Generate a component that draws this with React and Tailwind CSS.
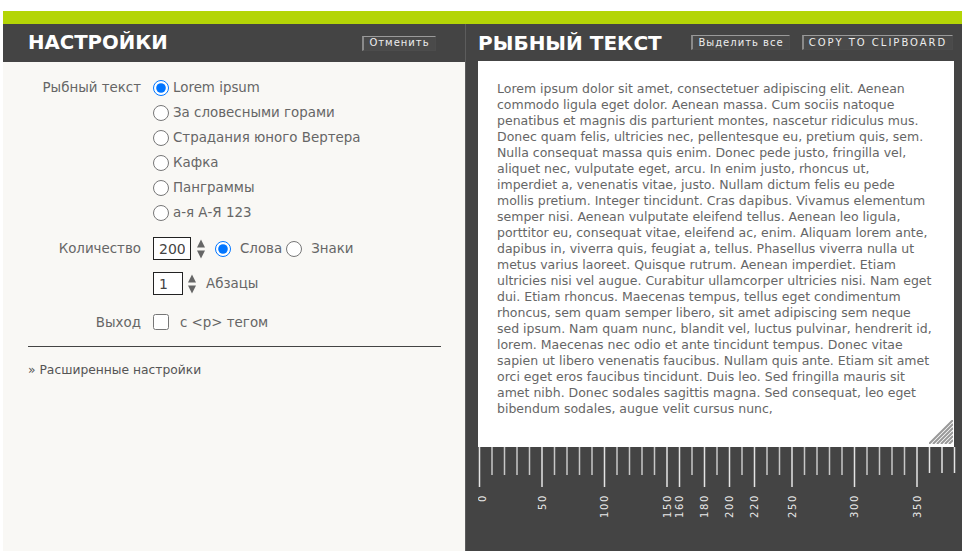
const sources = ["Lorem ipsum", "За словесными горами", "Страдания юного Вертера", "Кафка", "Панграммы", "а-я А-Я 123"];

const lines = [
  "Lorem ipsum dolor sit amet, consectetuer adipiscing elit. Aenean",
  "commodo ligula eget dolor. Aenean massa. Cum sociis natoque",
  "penatibus et magnis dis parturient montes, nascetur ridiculus mus.",
  "Donec quam felis, ultricies nec, pellentesque eu, pretium quis, sem.",
  "Nulla consequat massa quis enim. Donec pede justo, fringilla vel,",
  "aliquet nec, vulputate eget, arcu. In enim justo, rhoncus ut,",
  "imperdiet a, venenatis vitae, justo. Nullam dictum felis eu pede",
  "mollis pretium. Integer tincidunt. Cras dapibus. Vivamus elementum",
  "semper nisi. Aenean vulputate eleifend tellus. Aenean leo ligula,",
  "porttitor eu, consequat vitae, eleifend ac, enim. Aliquam lorem ante,",
  "dapibus in, viverra quis, feugiat a, tellus. Phasellus viverra nulla ut",
  "metus varius laoreet. Quisque rutrum. Aenean imperdiet. Etiam",
  "ultricies nisi vel augue. Curabitur ullamcorper ultricies nisi. Nam eget",
  "dui. Etiam rhoncus. Maecenas tempus, tellus eget condimentum",
  "rhoncus, sem quam semper libero, sit amet adipiscing sem neque",
  "sed ipsum. Nam quam nunc, blandit vel, luctus pulvinar, hendrerit id,",
  "lorem. Maecenas nec odio et ante tincidunt tempus. Donec vitae",
  "sapien ut libero venenatis faucibus. Nullam quis ante. Etiam sit amet",
  "orci eget eros faucibus tincidunt. Duis leo. Sed fringilla mauris sit",
  "amet nibh. Donec sodales sagittis magna. Sed consequat, leo eget",
  "bibendum sodales, augue velit cursus nunc,",
];

const labels = { 0: "0", 5: "50", 10: "100", 15: "150", 16: "160", 18: "180", 20: "200", 22: "220", 25: "250", 30: "300", 35: "350" };

function PixelButton({ children, className }) {
  return (
    <button className={"flex h-[15px] items-center justify-center border border-[#4c4c4c] border-l-2 border-l-[#8a8a8a] border-t-[#9a9a9a] bg-[#4a4a4a] font-['DejaVu_Sans',sans-serif] text-[10px] leading-none text-[#eeeeee] " + className}>
      {children}
    </button>
  );
}

function Spinner() {
  return (
    <svg width="10" height="22" viewBox="0 0 10 22" className="shrink-0">
      <path d="M5 1.5 L9 9.5 H1 Z" fill="#666" />
      <path d="M5 20.5 L9 12.5 H1 Z" fill="#666" />
    </svg>
  );
}

function Ruler() {
  const ticks = Array.from({ length: 39 }, (_, i) => i);
  return (
    <svg width="484" height="104" className="block">
      {ticks.map((i) => {
        const x = 1.5 + i * 12.5;
        const major = labels[i] !== undefined;
        const h = major ? 40 : i > 35 ? 26 : 28;
        return <rect key={i} x={x - 0.75} y="0" width="1.5" height={h} fill={major || i > 35 ? "#e4e4e4" : "#c8c8c8"} />;
      })}
      {Object.entries(labels).map(([i, text]) => (
        <text
          key={i}
          transform={`translate(${i === "0" ? 7.5 : 1.5 + i * 12.5 + 3.5} 47) rotate(-90)`}
          textAnchor="end"
          fill="#e8e8e8"
          fontSize="10"
          letterSpacing="1.6"
          fontFamily="'DejaVu Sans', sans-serif"
        >
          {text}
        </text>
      ))}
    </svg>
  );
}

export default function App() {
  return (
    <div className="flex h-[551px] w-[962px] flex-col overflow-hidden bg-white pl-[3px] pt-[11px] font-['DejaVu_Sans',sans-serif]">
      <div className="h-[13px] shrink-0 bg-[#b4d506]" />
      <div className="flex min-h-0 flex-1">
        <div className="flex w-[462px] shrink-0 flex-col bg-[#f9f8f5]">
          <div className="flex h-[38px] shrink-0 items-center justify-between bg-[#444444] pl-[25px] pr-[29px]">
            <h1 className="text-[19.7px] font-bold leading-none text-white">НАСТРОЙКИ</h1>
            <PixelButton className="w-[74px] tracking-[1px]">Отменить</PixelButton>
          </div>
          <div className="px-[25px] pt-[13px] text-[13.4px] text-[#666666]">
            <div className="flex">
              <div className="w-[113px] text-right leading-[25px]">Рыбный текст</div>
              <div className="ml-[12px] flex flex-col">
                {sources.map((s, i) => (
                  <label key={s} className="flex h-[25px] items-center gap-[4px]">
                    <input type="radio" name="source" defaultChecked={i === 0} className="m-0 h-4 w-4 accent-[#0075ff]" />
                    <span className="pt-[2px]">{s}</span>
                  </label>
                ))}
              </div>
            </div>
            <div className="mt-[12px] flex items-center">
              <div className="w-[113px] pt-[2px] text-right">Количество</div>
              <input readOnly value="200" className="ml-[12px] h-[23px] w-[38px] border border-[#222] bg-white px-[5px] text-[14px] text-[#444]" />
              <div className="ml-[5px]"><Spinner /></div>
              <input type="radio" name="unit" defaultChecked className="m-0 ml-[9px] h-4 w-4 accent-[#0075ff]" />
              <span className="ml-[9px] pt-[2px]">Слова</span>
              <input type="radio" name="unit" className="m-0 ml-[4px] h-4 w-4" />
              <span className="ml-[9px] pt-[2px]">Знаки</span>
            </div>
            <div className="mt-[12px] flex items-center">
              <input readOnly value="1" className="ml-[125px] h-[23px] w-[30px] border border-[#222] bg-white px-[5px] text-[14px] text-[#444]" />
              <div className="ml-[4px]"><Spinner /></div>
              <span className="ml-[9px] pt-[2px]">Абзацы</span>
            </div>
            <div className="mt-[16px] flex items-center">
              <div className="w-[113px] pt-[2px] text-right">Выход</div>
              <input type="checkbox" className="m-0 ml-[12px] h-4 w-4" />
              <span className="ml-[11px] pt-[2px]">с &lt;p&gt; тегом</span>
            </div>
            <div className="mt-[13px] h-px w-[413px] bg-[#444444]" />
            <a className="mt-[14px] block text-[12.3px] text-[#555555]">» Расширенные настройки</a>
          </div>
        </div>
        <div className="flex min-w-0 flex-1 flex-col border-l border-l-[#5c5c5c] bg-[#444444] pl-[12px] pr-[8px]">
          <div className="flex h-[37px] shrink-0 items-center">
            <h2 className="w-[213px] whitespace-nowrap text-[20px] font-bold leading-none text-white">РЫБНЫЙ ТЕКСТ</h2>
            <PixelButton className="w-[99px] tracking-[1px]">Выделить все</PixelButton>
            <PixelButton className="ml-[12px] w-[151px] tracking-[2px]">COPY TO CLIPBOARD</PixelButton>
          </div>
          <div className="relative h-[386px] shrink-0 bg-white pl-[19px] pt-[20px] text-[12.5px] leading-[16px] text-[#666666]">
            {lines.map((l) => (
              <div key={l} className="whitespace-nowrap">{l}</div>
            ))}
            <svg width="24" height="24" viewBox="0 0 24 24" className="absolute bottom-[3px] right-[1px]">
              {[0, 4, 8, 12, 16, 20].map((o) => (
                <path key={o} d={`M${o} 24 L24 ${o}`} stroke="#999" strokeWidth="2" />
              ))}
            </svg>
          </div>
          <Ruler />
        </div>
      </div>
    </div>
  );
}
